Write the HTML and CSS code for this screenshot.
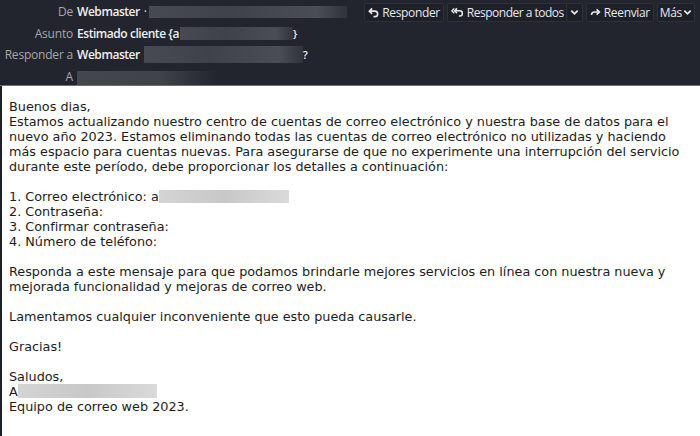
FILE: index.html
```html
<!DOCTYPE html>
<html lang="es">
<head>
<meta charset="utf-8">
<title>Mensaje</title>
<link rel="stylesheet" href="styles.css">
</head>
<body>
<div class="msg">
  <header class="hdr">
    <div class="fields">
      <div class="lbl">De</div>
      <div class="val"><b>Webmaster</b><span class="dot">·</span><span class="redact r-from"></span></div>
      <div class="lbl">Asunto</div>
      <div class="val"><b>Estimado cliente {a</b><span class="redact r-subj"></span><b class="tail">}</b></div>
      <div class="lbl">Responder a</div>
      <div class="val"><b>Webmaster</b><span class="redact r-reply"></span><b class="tail">?</b></div>
      <div class="lbl">A</div>
      <div class="val"><span class="redact r-to"></span></div>
    </div>
    <div class="actions">
      <button class="btn">
        <svg class="ico" viewBox="0 0 12 12" width="11" height="11"><path d="M4.5 1.5 L1.5 4.5 L4.5 7.5 M1.8 4.5 H7.5 A3 3 0 0 1 7.5 10.5 H6" fill="none" stroke="currentColor" stroke-width="1.8" stroke-linejoin="miter"/></svg>Responder
      </button>
      <div class="split">
        <button class="btn main">
          <svg class="ico" viewBox="0 0 14 12" width="13" height="11"><path d="M3.5 1.5 L0.8 4.2 L3.5 6.9" fill="none" stroke="currentColor" stroke-width="1.5"/><path d="M6.5 1.5 L3.8 4.2 L6.5 6.9 M4 4.2 H9.5 A2.8 2.8 0 0 1 9.5 9.8 H8.5" fill="none" stroke="currentColor" stroke-width="1.6"/></svg>Responder a todos
        </button>
        <button class="btn drop"><svg viewBox="0 0 10 10" width="9" height="9"><path d="M1.5 3 L5 6.5 L8.5 3" fill="none" stroke="currentColor" stroke-width="2"/></svg></button>
      </div>
      <button class="btn">
        <svg class="ico" viewBox="0 0 12 12" width="11" height="11"><path d="M1.5 8.5 Q2 5.5 5 5.5 H10" fill="none" stroke="currentColor" stroke-width="1.8"/><path d="M7.2 2.7 L10.2 5.5 L7.2 8.3" fill="none" stroke="currentColor" stroke-width="1.8"/></svg>Reenviar
      </button>
      <button class="btn more">Más<svg viewBox="0 0 10 10" width="9" height="9"><path d="M1.5 3 L5 6.5 L8.5 3" fill="none" stroke="currentColor" stroke-width="2"/></svg></button>
    </div>
  </header>
  <div class="body">
    <p>Buenos dias,<br>
    Estamos actualizando nuestro centro de cuentas de correo electrónico y nuestra base de datos para el nuevo año 2023. Estamos eliminando todas las cuentas de correo electrónico no utilizadas y haciendo más espacio para cuentas nuevas. Para asegurarse de que no experimente una interrupción del servicio durante este período, debe proporcionar los detalles a continuación:</p>
    <p>1. Correo electrónico: a<span class="redact light r-mail"></span><br>
    2. Contraseña:<br>
    3. Confirmar contraseña:<br>
    4. Número de teléfono:</p>
    <p>Responda a este mensaje para que podamos brindarle mejores servicios en línea con nuestra nueva y mejorada funcionalidad y mejoras de correo web.</p>
    <p>Lamentamos cualquier inconveniente que esto pueda causarle.</p>
    <p>Gracias!</p>
    <p>Saludos,<br>
    A<span class="redact light r-sign"></span><br>
    Equipo de correo web 2023.</p>
  </div>
</div>
</body>
</html>
```

FILE: styles.css
```css
html, body {
  margin: 0;
  padding: 0;
  background: #ffffff;
}
.msg {
  width: 700px;
  height: 436px;
  overflow: hidden;
  display: flex;
  flex-direction: column;
}
.hdr {
  height: 85px;
  flex: none;
  background: #22252d;
  border-bottom: 1px solid #707070;
  display: flex;
  align-items: flex-start;
  overflow: hidden;
  font-family: "Open Sans", "Noto Sans", sans-serif;
  font-size: 12px;
  letter-spacing: -0.2px;
}
.fields {
  flex: 1 1 auto;
  min-width: 0;
  overflow: hidden;
  display: grid;
  grid-template-columns: 73px auto;
  grid-auto-rows: 21.5px;
  column-gap: 4px;
  padding-top: 1px;
  align-items: center;
}
.lbl {
  text-align: right;
  color: #a4a7ae;
  white-space: nowrap;
}
.val {
  color: #f0f0f0;
  white-space: nowrap;
  display: flex;
  align-items: center;
}
.val b {
  font-weight: 600;
  letter-spacing: -0.45px;
}
.dot {
  color: #ddd;
  margin-left: 4px;
}
.tail {
  font-size: 11px;
}
.redact {
  display: inline-block;
  vertical-align: middle;
  background: linear-gradient(90deg, #474a52, #3f4249 40%, #4b4d54 85%, #30333b);
}
.r-from { width: 198px; height: 12px; margin-left: 2px; }
.r-subj { width: 113px; height: 13px; margin-left: 1px; }
.r-reply { width: 159px; height: 17px; margin-left: 4px; }
.r-to { width: 140px; height: 16px; margin-top: 5px; background: linear-gradient(90deg, #45474f, #3f4249 60%, #22252d); }
.actions {
  flex: none;
  display: flex;
  gap: 3px;
  padding: 3px 5px 0 12px;
}
.btn {
  flex: none;
  white-space: nowrap;
  display: flex;
  align-items: center;
  gap: 3px;
  height: 19px;
  padding: 0 3px;
  background: #1e2027;
  border: 1px solid #2e3139;
  border-radius: 2px;
  color: #e6e8ec;
  font-family: "Open Sans", "Noto Sans", sans-serif;
  font-size: 12px;
  letter-spacing: -0.35px;
  line-height: 1;
  cursor: pointer;
}
.ico { flex: none; }
.split { display: flex; }
.split .main { border-right: none; border-radius: 2px 0 0 2px; padding-right: 2px; letter-spacing: -0.5px; }
.split .drop { border-radius: 0 2px 2px 0; padding: 0 3px; }
.more { gap: 1px; padding: 0 2px; }
.body {
  flex: 1;
  border-left: 2px solid #1e2027;
  padding: 13px 8px 0 7px;
  font-family: "DejaVu Sans", sans-serif;
  font-size: 12.8px;
  line-height: 15px;
  color: #1c1c1c;
}
.body p {
  margin: 0 0 15px 0;
}
.light {
  background: linear-gradient(90deg, #d4d4d4, #c8c8c8 50%, #dadada);
  vertical-align: -2px;
}
.r-mail { width: 130px; height: 13px; }
.r-sign { width: 139px; height: 14px; }
```
